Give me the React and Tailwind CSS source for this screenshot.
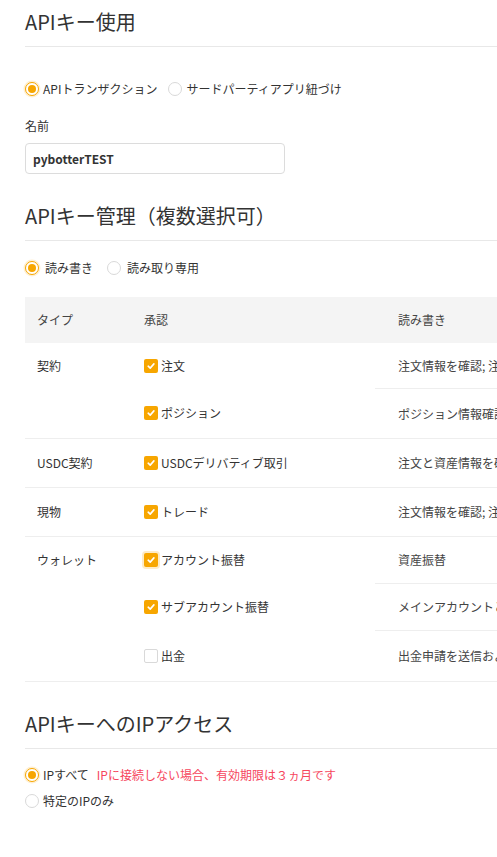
import React from "react";

const font = { fontFamily: '"Noto Sans CJK JP", "Noto Sans", sans-serif' };

function Radio({ checked, label, extra, gap = "ml-[4px]" }) {
  return (
    <label className="flex items-center h-[20px] text-[12px] text-[#333] leading-[20px]">
      {checked ? (
        <span className="w-[14px] h-[14px] rounded-full border border-[#f7a600] bg-white flex items-center justify-center shadow-[0_0_0_1.5px_rgba(247,166,0,0.18)]">
          <span className="w-[8px] h-[8px] rounded-full bg-[#f7a600]" />
        </span>
      ) : (
        <span className="w-[14px] h-[14px] rounded-full border border-[#d9d9d9] bg-white" />
      )}
      <span className={gap}>{label}</span>
      {extra}
    </label>
  );
}

function Check({ checked, glow }) {
  if (!checked)
    return <span className="w-[14px] h-[14px] rounded-[2px] border border-[#d9d9d9] bg-white shrink-0" />;
  return (
    <span
      className={
        "w-[14px] h-[14px] rounded-[2px] bg-[#f7a600] flex items-center justify-center shrink-0" +
        (glow ? " shadow-[0_0_0_2px_rgba(247,166,0,0.22)]" : "")
      }
    >
      <svg width="10" height="10" viewBox="0 0 10 10" fill="none">
        <path d="M2.2 5.2 L4.2 7.1 L7.9 2.9" stroke="white" strokeWidth="1.6" strokeLinecap="round" strokeLinejoin="round" />
      </svg>
    </span>
  );
}

function Title({ children }) {
  return (
    <div className="border-b border-[#e8e8e8] pb-[10px]">
      <h2 className="text-[20px] leading-[28px] text-[#333] font-normal">{children}</h2>
    </div>
  );
}

const groups = [
  {
    type: "契約",
    rows: [
      { label: "注文", checked: true, desc: "注文情報を確認; 注文を出す/キャンセル", h: "h-[45px]" },
      { label: "ポジション", checked: true, desc: "ポジション情報確認; ポジション変更", h: "h-[50px]" },
    ],
  },
  {
    type: "USDC契約",
    rows: [{ label: "USDCデリバティブ取引", checked: true, desc: "注文と資産情報を確認; 注文を出す/キャンセル", h: "h-[48px]" }],
  },
  {
    type: "現物",
    rows: [{ label: "トレード", checked: true, desc: "注文情報を確認; 注文を出す/キャンセル", h: "h-[48px]" }],
  },
  {
    type: "ウォレット",
    rows: [
      { label: "アカウント振替", checked: true, glow: true, desc: "資産振替", h: "h-[46px]" },
      { label: "サブアカウント振替", checked: true, desc: "メインアカウントとサブアカウント間の振替", h: "h-[47px]" },
      { label: "出金", checked: false, desc: "出金申請を送信および出金情報を確認", h: "h-[51px]" },
    ],
  },
];

export default function App() {
  return (
    <div className="w-[497px] h-[857px] overflow-hidden bg-white" style={font}>
      <div className="w-[900px] pl-[25px] pr-[25px] pt-[8px]">
        <Title>APIキー使用</Title>

        <div className="mt-[32px] flex items-center gap-[11px]">
          <Radio checked label="APIトランザクション" />
          <Radio label="サードパーティアプリ紐づけ" />
        </div>

        <div className="mt-[18px] text-[12px] leading-[18px] text-[#333]">名前</div>
        <div className="mt-[8px] w-[260px] h-[31px] border border-[#dcdcdc] rounded-[4px] flex items-center px-[7px]">
          <span className="text-[12px] font-bold text-[#333]">pybotterTEST</span>
        </div>

        <div className="mt-[28px]">
          <Title>APIキー管理（複数選択可）</Title>
        </div>

        <div className="mt-[17px] flex items-center gap-[14px]">
          <Radio checked label="読み書き" gap="ml-[6px]" />
          <Radio label="読み取り専用" gap="ml-[6px]" />
        </div>

        <div className="mt-[19px]">
          <div className="flex h-[46px] items-center bg-[#f4f4f4] text-[12px] text-[#444]">
            <div className="w-[107px] pl-[12px]">タイプ</div>
            <div className="w-[243px] pl-[12px]">承認</div>
            <div className="flex-1 pl-[23px]">読み書き</div>
          </div>
          {groups.map((g) => (
            <div key={g.type} className="border-b border-[#eeeeee]">
              {g.rows.map((r, i) => (
                <div key={r.label} className={"flex text-[12px] text-[#333] " + r.h}>
                  <div className="w-[107px] pl-[12px] flex items-center">{i === 0 ? g.type : ""}</div>
                  <div className="w-[243px] pl-[12px] flex items-center gap-[3px]">
                    <Check checked={r.checked} glow={r.glow} />
                    <span>{r.label}</span>
                  </div>
                  <div
                    className={
                      "flex-1 pl-[23px] flex items-center text-[#444] " + (i > 0 ? "border-t border-[#eeeeee]" : "")
                    }
                  >
                    {r.desc}
                  </div>
                </div>
              ))}
            </div>
          ))}
        </div>

        <div className="mt-[28px]">
          <Title>APIキーへのIPアクセス</Title>
        </div>

        <div className="mt-[16px] flex flex-col gap-[6px]">
          <Radio
            checked
            label="IPすべて"
            extra={<span className="ml-[8px] text-[#f6465d]">IPに接続しない場合、有効期限は３ヵ月です</span>}
          />
          <Radio label="特定のIPのみ" />
        </div>
      </div>
    </div>
  );
}
